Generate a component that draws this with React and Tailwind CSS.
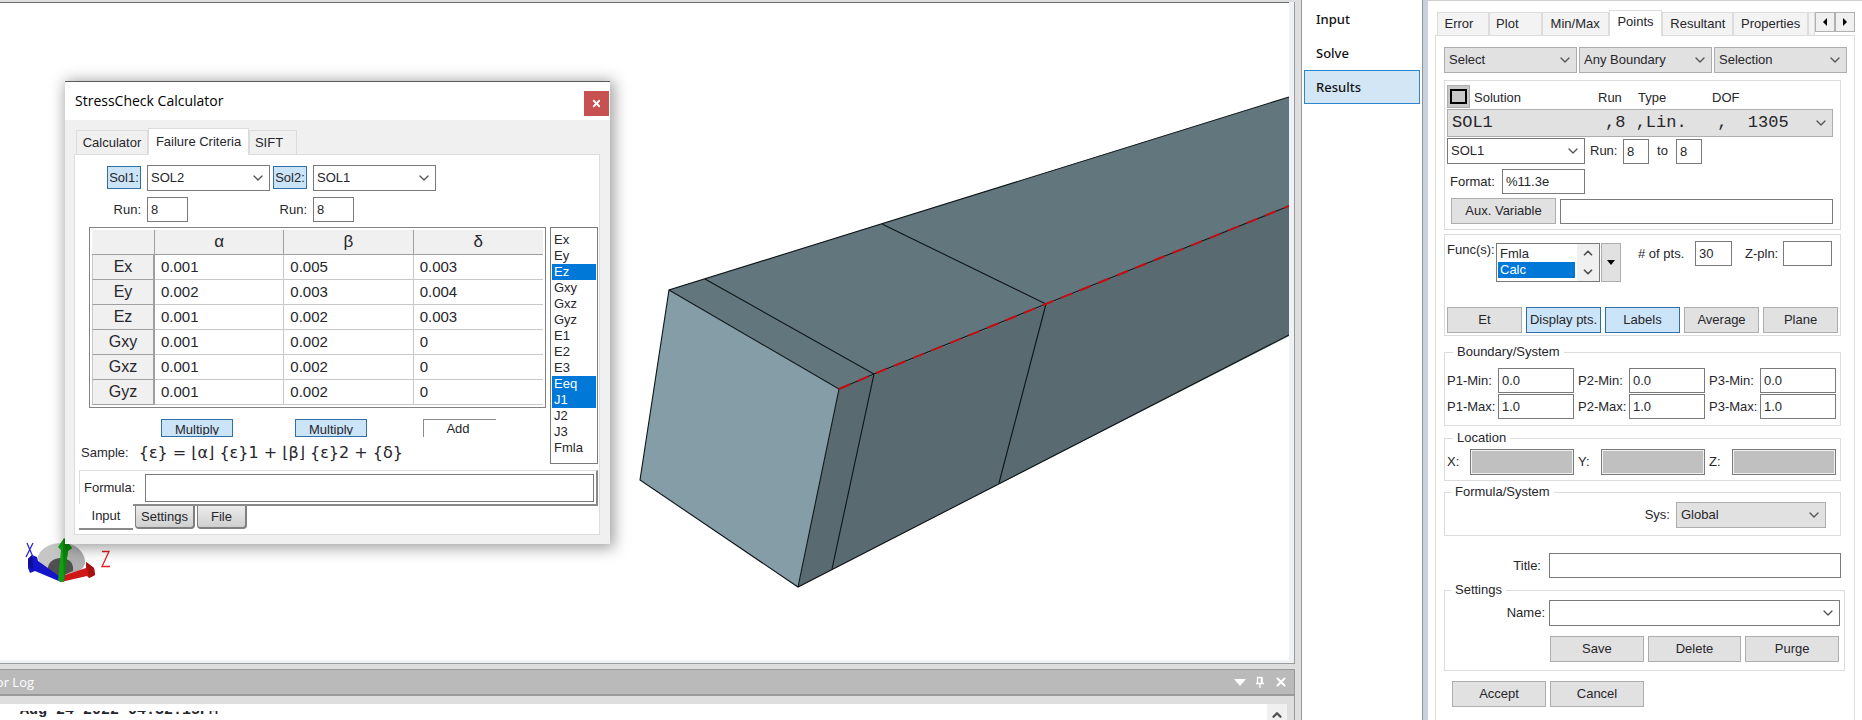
import { useState } from "react";
import { ChevronDown, ChevronUp, X } from "lucide-react";

const tableRows = [
  { name: "Ex", alpha: "0.001", beta: "0.005", delta: "0.003" },
  { name: "Ey", alpha: "0.002", beta: "0.003", delta: "0.004" },
  { name: "Ez", alpha: "0.001", beta: "0.002", delta: "0.003" },
  { name: "Gxy", alpha: "0.001", beta: "0.002", delta: "0" },
  { name: "Gxz", alpha: "0.001", beta: "0.002", delta: "0" },
  { name: "Gyz", alpha: "0.001", beta: "0.002", delta: "0" }
];

const components = ["Ex", "Ey", "Ez", "Gxy", "Gxz", "Gyz", "E1", "E2", "E3", "Eeq", "J1", "J2", "J3", "Fmla"];

const optionClass =
  "p-0 checked:bg-linear-to-r checked:from-[#0078d7] checked:to-[#0078d7] checked:[-webkit-text-fill-color:white]";

const solutionLine = "SOL1           ,8 ,Lin.   ,  1305".replace(/ /g, "\u00a0");

function Combo({ label, options, className = "", gray = false, mono = false }) {
  return (
    <div className={`relative ${className}`}>
      <select
        aria-label={label}
        className={`block h-full w-full appearance-none border outline-none ${
          gray ? "border-[#adadad] bg-[#e1e1e1] px-[4px]" : "border-[#7a7a7a] bg-white px-[3px]"
        } ${mono ? "font-['Liberation_Mono',monospace] text-[17px] leading-5" : ""}`}
      >
        {options.map((option) => (
          <option key={option}>{option}</option>
        ))}
      </select>
      <ChevronDown className="pointer-events-none absolute right-1 top-1/2 size-4 -translate-y-1/2 text-[#555]" strokeWidth={2} />
    </div>
  );
}

function TextBox({ label, value = "", className = "" }) {
  return (
    <input
      type="text"
      aria-label={label}
      defaultValue={value}
      className={`h-[25px] min-w-0 border border-[#7a7a7a] bg-white px-[3px] outline-none ${className}`}
    />
  );
}

function Button({ children, active = false, className = "" }) {
  return (
    <button
      type="button"
      className={`h-[26px] border ${active ? "border-[#2f6fa8] bg-[#cce4f7]" : "border-[#adadad] bg-[#e1e1e1]"} ${className}`}
    >
      {children}
    </button>
  );
}

function Beam() {
  return (
    <svg
      viewBox="0 3 1289 657"
      preserveAspectRatio="xMaxYMin slice"
      className="block h-full w-full"
      role="img"
      aria-label="Model view"
    >
      <polygon points="669,290 1289,97 1289,206 839,389" fill="#62767d" />
      <polygon points="839,389 1289,206 1289,336 798,587" fill="#596b71" />
      <polygon points="669,290 839,389 798,587 640,480" fill="#849da7" />
      <g fill="none" stroke="#0e1517" strokeWidth="1.1">
        <path d="M1289 97 669 290 640 480 798 587 1289 335" />
        <path d="M669 290 839 389 798 587" />
        <path d="M705 279 874 374 832 569" />
        <path d="M882 224 1046 304 999 483" />
        <path d="M839 389 874 374 1046 304 1289 206" />
      </g>
      <path d="M839 389 874 374 1046 304 1289 206" fill="none" stroke="#c20d12" strokeWidth="2" strokeDasharray="12 8" />

      {/* axis triad */}
      <path d="M38 556c4-9 13-13 24-13s21 7 23 18c0 8-6 12-22 14-14-2-26-9-25-19Z" fill="#c6c6c6" />
      <path d="M63 543c12 0 21 8 22 18 0 7-5 10-12 11Z" fill="#b0b0b0" />
      <path d="M48 570c-1-7 5-12 13-12s13 5 12 13l-13 6Z" fill="#505050" />
      <path d="m28 559 4-4 5 2 1 4 24 17-1 4-26-11-5 2-2-5Z" fill="#1414c8" />
      <path d="m28 559 4-4 1 14-3-1-2-4Z" fill="#0d0d96" />
      <path d="m61 582 1-6 24-8v-6l8 6 1 7-6 3-2-2Z" fill="#d01717" />
      <path d="m86 562 8 6 1 7-6 3Z" fill="#a81010" />
      <path d="m58 547 6-9 8 10-4 3-4 31-6-1 3-31Z" fill="#12a012" />
      <path d="m64 538 8 10-4 3-4 31-1-32Z" fill="#0b850b" />
      <path d="m27 543 6 14M33 543l-7 14" stroke="#2a2ad8" strokeWidth="1.3" />
      <path d="M102 551.500h7l-7 15h8" fill="none" stroke="#e02020" strokeWidth="1.300" />
    </svg>
  );
}

function SolutionPicker({ title, solution, options }) {
  return (
    <div className="grid grid-cols-[34px_123px] gap-x-1.5 gap-y-1.5">
      <button type="button" className="mb-[2px] mt-px h-[23px] border border-[#2f6fa8] bg-[#cce4f7]">
        {title}
      </button>
      <Combo label={`${title} name`} options={[solution, ...options]} className="h-[26px]" />
      <span className="text-right leading-[25px]">Run:</span>
      <TextBox label={`${title} run`} value="8" className="w-[41px]" />
    </div>
  );
}

function CoefficientTable() {
  const cell = "h-[25px] border-b border-r border-[#c8c8c8] bg-white px-[6px] py-0";
  return (
    <div className="border border-[#828282] p-[2px]">
      <table className="w-full table-fixed border-separate border-spacing-0 text-[15px] leading-5">
        <thead>
          <tr className="bg-[#f0f0f0] text-[17px]">
            <th className="h-[25px] w-[63px] border-b border-r border-[#a0a0a0] p-0" />
            <th className="border-b border-r border-[#a0a0a0] p-0 font-normal">α</th>
            <th className="border-b border-r border-[#a0a0a0] p-0 font-normal">β</th>
            <th className="border-b border-[#a0a0a0] p-0 font-normal">δ</th>
          </tr>
        </thead>
        <tbody>
          {tableRows.map((row) => (
            <tr key={row.name}>
              <th className="border-b border-l border-r-2 border-[#a0a0a0] border-l-[#c8c8c8] bg-[#f0f0f0] p-0 text-[16px] font-normal">
                {row.name}
              </th>
              <td className={cell}>{row.alpha}</td>
              <td className={cell}>{row.beta}</td>
              <td className={`${cell} border-r-0`}>{row.delta}</td>
            </tr>
          ))}
        </tbody>
      </table>
    </div>
  );
}

function MultiplyButton() {
  return (
    <button type="button" className="h-[18px] w-[72px] border border-[#2f6fa8] bg-[#cce4f7] pt-px">
      <span className="block h-[13px] overflow-hidden leading-4">Multiply</span>
    </button>
  );
}

function CalculatorDialog({ onClose }) {
  return (
    <section className="absolute left-[65px] top-[78px] w-[545px] border-t border-[#5a5a5a] bg-[#f0f0f0] pb-[9px] shadow-[2px_2px_14px_2px_rgba(0,0,0,0.38)]">
      <header className="flex h-[38px] items-center justify-between bg-white pl-[10px] pr-px">
        <h2 className="font-['Open_Sans',sans-serif] text-[14px] text-black">StressCheck Calculator</h2>
        <button
          type="button"
          aria-label="Close"
          onClick={onClose}
          className="mt-1 flex size-[25px] items-center justify-center bg-[#c75050] text-white"
        >
          <X className="size-[11px]" strokeWidth={4} />
        </button>
      </header>

      <div className="pl-[9px] pr-[10px] pt-2">
        <nav className="flex items-end pl-0.5">
          <button type="button" className="h-6 w-[72px] border border-b-0 border-[#dcdcdc] bg-[#f0f0f0]">
            Calculator
          </button>
          <button type="button" className="relative -mb-px h-[27px] w-[101px] border border-b-0 border-[#dcdcdc] bg-white">
            Failure Criteria
          </button>
          <button type="button" className="h-6 w-12 border border-b-0 border-[#dcdcdc] bg-[#f0f0f0] pr-2">
            SIFT
          </button>
        </nav>

        <div className="border border-[#dcdcdc] bg-white pb-1">
          <div className="flex gap-[3px] pl-8 pt-[10px]">
            <SolutionPicker title="Sol1:" solution="SOL2" options={["SOL1"]} />
            <SolutionPicker title="Sol2:" solution="SOL1" options={["SOL2"]} />
          </div>

          <div className="mt-[5px] flex gap-1 pl-[14px] pr-px">
            <div className="min-w-0 flex-1">
              <CoefficientTable />
              <div className="mt-[11px] flex gap-[62px] pl-[72px]">
                <MultiplyButton />
                <MultiplyButton />
                <button type="button" className="-ml-1.5 h-[18px] w-[73px] border-l border-t border-[#8a8a8a] bg-white pr-1 leading-4">
                  Add
                </button>
              </div>
              <p className="-ml-2 mt-1.5 flex items-center gap-[10px] leading-5">
                Sample:
                <span className="whitespace-nowrap font-['DejaVu_Sans',sans-serif] text-[16px]">
                  {"{ε} = ⌊α⌋ {ε}1 + ⌊β⌋ {ε}2 + {δ}"}
                </span>
              </p>
            </div>
            <select
              multiple
              aria-label="Components"
              defaultValue={["Ez", "Eeq", "J1"]}
              className="h-[237px] w-[48px] overflow-hidden border border-[#7a7a7a] px-px py-[4px] text-[13px] leading-4 outline-none"
            >
              {components.map((name) => (
                <option key={name} className={`${optionClass} h-4 pl-[2px]`}>
                  {name}
                </option>
              ))}
            </select>
          </div>

          <div className="ml-1 mr-px mt-1.5 flex items-center border-b-2 border-l border-r-2 border-t border-[#8a8a8a] border-l-[#dcdcdc] border-t-[#dcdcdc] pb-0.5 pl-1 pr-0.5 pt-[3px]">
            <label htmlFor="formula" className="w-[61px]">
              Formula:
            </label>
            <input id="formula" className="h-7 min-w-0 flex-1 border border-[#7a7a7a] px-1 outline-none" />
          </div>
          <div className="ml-1 flex gap-[2px]">
            <button type="button" className="-mt-0.5 h-[26px] w-[54px] border-b-2 border-[#8a8a8a] bg-white">
              Input
            </button>
            <button
              type="button"
              className="h-[23px] w-[60px] rounded-b-sm border border-b-2 border-r-2 border-t-0 border-[#808080] bg-linear-to-b from-[#ececec] to-[#cfcfcf]"
            >
              Settings
            </button>
            <button
              type="button"
              className="h-[23px] w-[50px] rounded-b-sm border border-b-2 border-r-2 border-t-0 border-[#808080] bg-linear-to-b from-[#ececec] to-[#cfcfcf]"
            >
              File
            </button>
          </div>
        </div>
      </div>
    </section>
  );
}

function ErrorLog() {
  return (
    <section className="h-[51px] shrink-0 overflow-hidden border-r border-t border-[#9a9a9a]">
      <header className="flex h-[25px] items-center justify-between border-b border-[#9a9a9a] bg-[#bababa] pr-1.5 text-white">
        <h2 className="-ml-[22px] font-['Open_Sans',sans-serif] text-[13px] font-medium">Error Log</h2>
        <div className="flex items-center gap-2">
          <button type="button" aria-label="Options">
            <svg viewBox="0 0 12 7" className="h-[7px] w-3">
              <path d="M0 0h12L6 7Z" fill="currentColor" />
            </svg>
          </button>
          <button type="button" aria-label="Pin">
            <svg viewBox="0 0 12 12" className="size-3" fill="none" stroke="currentColor">
              <path d="M3.500 7V1.500h4V7M2 7.500h8M6 8v4" strokeWidth="1.300" />
              <path d="M7.800 1v6" strokeWidth="2" />
            </svg>
          </button>
          <button type="button" aria-label="Close log">
            <X className="size-3.5" strokeWidth={3.5} />
          </button>
        </div>
      </header>
      <div className="border-t border-[#9a9a9a] bg-[#dedede] pr-[7px] pt-[8px]">
        <div className="flex h-5 justify-between bg-white">
          <div className="mt-[7px] h-[9px] overflow-hidden pl-5">
            <p className="-mt-[8px] font-['Liberation_Mono',monospace] text-[15px] font-bold leading-4">Aug 24 2022 04:32:15PM</p>
          </div>
          <div className="w-5 bg-[#f0f0f0] pt-1">
            <ChevronUp className="mx-auto size-3.5 text-[#505050]" strokeWidth={4} />
          </div>
        </div>
      </div>
    </section>
  );
}

function ModeList() {
  const [mode, setMode] = useState("Results");
  return (
    <nav className="w-[121px] shrink-0 border-l border-[#9a9a9a] bg-white px-[2px] pt-[2px] font-['Noto_Sans',sans-serif] text-[13px] font-medium text-[#111]">
      {["Input", "Solve", "Results"].map((item) => (
        <button
          key={item}
          type="button"
          onClick={() => setMode(item)}
          className={`block h-[34px] w-full border pl-[11px] text-left ${
            mode === item ? "border-[#2f86d0] bg-[#d3e6f5]" : "border-transparent"
          }`}
        >
          {item}
        </button>
      ))}
    </nav>
  );
}

function PanelTabs() {
  const tab = "h-[23px] border border-b-0 border-[#dcdcdc] bg-[#f3f3f3]";
  return (
    <nav className="flex items-end pl-[2px]">
      <button type="button" className={`${tab} w-[52px] pr-2`}>Error</button>
      <button type="button" className={`${tab} w-[53px] pr-4`}>Plot</button>
      <button type="button" className={`${tab} w-[67px]`}>Min/Max</button>
      <button type="button" className="relative -mb-px h-[26px] w-[54px] border border-b-0 border-[#dcdcdc] bg-white pb-1">
        Points
      </button>
      <button type="button" className={`${tab} w-[71px]`}>Resultant</button>
      <button type="button" className={`${tab} w-[75px]`}>Properties</button>
      <span className={`${tab} w-[7px]`} />
      <span className="flex self-start pt-0.5">
        <button type="button" aria-label="Scroll left" className="flex h-5 w-5 items-center justify-center border border-[#b0b0b0] bg-[#f0f0f0]">
          <svg viewBox="0 0 4 8" className="h-2 w-1"><path d="M4 0v8L0 4Z" /></svg>
        </button>
        <button type="button" aria-label="Scroll right" className="flex h-5 w-5 items-center justify-center border border-[#b0b0b0] bg-[#f0f0f0]">
          <svg viewBox="0 0 4 8" className="h-2 w-1"><path d="M0 0v8l4-4Z" /></svg>
        </button>
      </span>
    </nav>
  );
}

function SolutionGroup() {
  return (
    <div className="mr-[13px] mt-[7px] h-[150px] border border-[#dcdcdc] pl-[2px] pr-[7px] pt-[2px]">
      <div className="flex h-[26px] items-center">
        <button type="button" aria-label="Toggle solution" className="flex size-[23px] items-center justify-center border border-[#adadad] bg-[#c8c8c8]">
          <span className="h-[15px] w-[17px] border-2 border-black" />
        </button>
        <div className="flex pl-1 pt-1">
          <span className="w-[124px]">Solution</span>
          <span className="w-10">Run</span>
          <span className="w-[74px]">Type</span>
          <span>DOF</span>
        </div>
      </div>
      <Combo gray mono label="Solution" options={[solutionLine]} className="h-7" />
      <div className="mt-px flex items-center">
        <Combo label="Solution name" options={["SOL1", "SOL2"]} className="h-[26px] w-[138px]" />
        <label htmlFor="run-from" className="w-[38px] pl-[5px]">Run:</label>
        <input id="run-from" defaultValue="8" className="h-[25px] w-[26px] border border-[#7a7a7a] px-[3px]" />
        <label htmlFor="run-to" className="w-[27px] text-center">to</label>
        <input id="run-to" defaultValue="8" className="h-[25px] w-[26px] border border-[#7a7a7a] px-[3px]" />
      </div>
      <div className="mt-[5px] flex items-center pl-[3px]">
        <label htmlFor="format" className="w-[52px]">Format:</label>
        <input id="format" defaultValue="%11.3e" className="h-[25px] w-[83px] border border-[#7a7a7a] px-[3px]" />
      </div>
      <div className="mt-1 flex items-center gap-1 pl-1">
        <Button className="w-[105px]">Aux. Variable</Button>
        <TextBox label="Aux. variable" className="flex-1" />
      </div>
    </div>
  );
}

function FunctionGroup() {
  return (
    <div className="mr-[13px] mt-1 flex h-[102px] flex-col justify-between border border-[#dcdcdc] pb-[2px] pl-[2px] pr-[2px] pt-[6px]">
      <div className="flex items-start">
        <label htmlFor="funcs" className="w-[49px] leading-[18px]">Func(s):</label>
        <div className="mt-[2px] flex h-[39px] w-[104px] justify-between border border-[#7a7a7a]">
          <select
            id="funcs"
            multiple
            defaultValue={["Calc"]}
            className="h-[36px] w-[78px] overflow-hidden pl-px pt-[2px] text-[13px] leading-4 outline-none"
          >
            <option className={`${optionClass} h-4 pl-0.5`}>Fmla</option>
            <option className={`${optionClass} h-4 pl-0.5`}>Calc</option>
          </select>
          <div className="flex w-[22px] flex-col items-center justify-around bg-[#f0f0f0] text-[#505050]">
            <ChevronUp className="size-3.5" strokeWidth={3} />
            <ChevronDown className="size-3.5" strokeWidth={3} />
          </div>
        </div>
        <button type="button" aria-label="More functions" className="ml-px mt-[2px] flex h-[39px] w-5 items-center justify-center border border-[#adadad] bg-[#e1e1e1]">
          <svg viewBox="0 0 8 5" className="h-[5px] w-2"><path d="M0 0h8L4 5Z" /></svg>
        </button>
        <label htmlFor="pts" className="w-[74px] whitespace-nowrap pl-[17px] leading-[25px]"># of pts.</label>
        <input id="pts" defaultValue="30" className="h-[25px] w-[37px] border border-[#7a7a7a] px-[3px]" />
        <label htmlFor="zpln" className="w-[51px] pl-[13px] leading-[25px]">Z-pln:</label>
        <input id="zpln" className="h-[25px] w-[49px] border border-[#7a7a7a] px-[3px]" />
      </div>
      <div className="grid grid-cols-5 gap-1">
        <Button>Et</Button>
        <Button active>Display pts.</Button>
        <Button active>Labels</Button>
        <Button>Average</Button>
        <Button>Plane</Button>
      </div>
    </div>
  );
}

function BoundField({ label, value }) {
  return (
    <label className="flex items-center">
      <span className="w-[51px] shrink-0 whitespace-nowrap">{label}</span>
      <input defaultValue={value} className="h-[25px] w-full min-w-0 border border-[#7a7a7a] px-[3px]" />
    </label>
  );
}

function PropertiesPanel() {
  const fieldset = "mr-[13px] border border-[#dcdcdc]";
  const legend = "ml-1.5 px-1 leading-4";
  return (
    <aside className="flex w-[440px] shrink-0 flex-col border-l border-[#8e959e] bg-white">
      <div className="flex flex-1 flex-col border-l-[5px] border-[#c9d1dd]">
        <div className="flex flex-1 flex-col border-t border-[#d0d0d0] pl-[7px] pr-[7px] pt-[9px]">
          <PanelTabs />
          <div className="flex-1 border border-b-0 border-[#dcdcdc] pl-2 pt-[11px]">
            <div className="mr-[7px] grid grid-cols-3 gap-[2px]">
              <Combo gray label="Action" options={["Select"]} className="h-[26px]" />
              <Combo gray label="Object" options={["Any Boundary"]} className="h-[26px]" />
              <Combo gray label="Method" options={["Selection"]} className="h-[26px]" />
            </div>

            <SolutionGroup />
            <FunctionGroup />

            <fieldset className={`${fieldset} mt-2 h-[82px] px-[2px]`}>
              <legend className={legend}>Boundary/System</legend>
              <div className="mr-[2px] mt-2 grid grid-cols-3 gap-x-1 gap-y-px">
                <BoundField label="P1-Min:" value="0.0" />
                <BoundField label="P2-Min:" value="0.0" />
                <BoundField label="P3-Min:" value="0.0" />
                <BoundField label="P1-Max:" value="1.0" />
                <BoundField label="P2-Max:" value="1.0" />
                <BoundField label="P3-Max:" value="1.0" />
              </div>
            </fieldset>

            <fieldset className={`${fieldset} mt-1 h-[51px] px-[2px]`}>
              <legend className={legend}>Location</legend>
              <div className="mr-[2px] mt-[3px] grid grid-cols-3 gap-x-1">
                {["X:", "Y:", "Z:"].map((axis) => (
                  <label key={axis} className="flex items-center">
                    <span className="w-[23px] shrink-0">{axis}</span>
                    <input disabled className="h-[26px] w-full min-w-0 border border-[#7a7a7a] bg-[#c0c0c0] shadow-[inset_0_0_0_1px_#f0f0f0]" />
                  </label>
                ))}
              </div>
            </fieldset>

            <fieldset className={`${fieldset} mt-[3px] h-[52px]`}>
              <legend className={legend}>Formula/System</legend>
              <div className="mr-[14px] mt-[2px] flex items-center justify-end gap-1.5">
                <span>Sys:</span>
                <Combo gray label="System" options={["Global"]} className="h-[26px] w-[150px]" />
              </div>
            </fieldset>

            <div className="mr-[13px] mt-[17px] flex items-center">
              <label htmlFor="title" className="w-[105px] pr-2 text-right">Title:</label>
              <input id="title" className="h-[25px] min-w-0 flex-1 border border-[#7a7a7a] px-1" />
            </div>

            <fieldset className="mr-[9px] mt-1 h-[89px] border border-[#dcdcdc] pr-[4px]">
              <legend className={legend}>Settings</legend>
              <div className="mt-[2px] flex items-center">
                <span className="w-[104px] pr-1 text-right">Name:</span>
                <Combo label="Name" options={[""]} className="h-[26px] flex-1" />
              </div>
              <div className="ml-[105px] mr-px mt-[10px] grid grid-cols-3 gap-1">
                <Button>Save</Button>
                <Button>Delete</Button>
                <Button>Purge</Button>
              </div>
            </fieldset>

            <div className="ml-2 mt-[10px] flex gap-1">
              <Button className="w-[94px]">Accept</Button>
              <Button className="w-[94px]">Cancel</Button>
            </div>
          </div>
        </div>
      </div>
    </aside>
  );
}

function App() {
  const [showCalculator, setShowCalculator] = useState(true);

  return (
    <div className="flex h-screen overflow-hidden bg-[#dedede] font-['Liberation_Sans',sans-serif] text-[13px] leading-4 text-[#26262b]">
      <main className="flex min-w-0 flex-1 flex-col gap-[5px] pr-[6px] pt-[2px]">
        <section className="relative min-h-0 flex-1 border-b border-r border-[#9a9a9a] bg-[#eef1f6] pb-[3px] pr-[5px]">
          <div className="relative h-full border-t border-[#6a6a6a] bg-white">
            <Beam />
            {showCalculator && <CalculatorDialog onClose={() => setShowCalculator(false)} />}
          </div>
        </section>
        <ErrorLog />
      </main>
      <ModeList />
      <PropertiesPanel />
    </div>
  );
}

export default App;
